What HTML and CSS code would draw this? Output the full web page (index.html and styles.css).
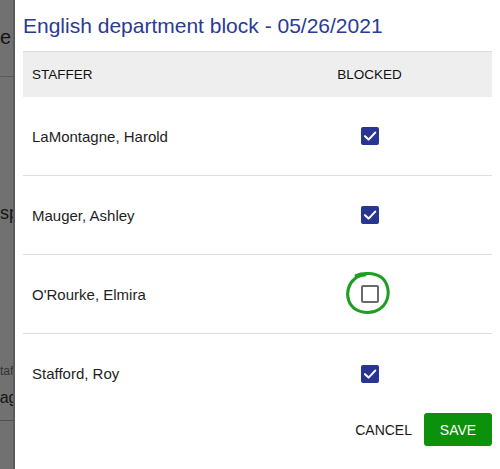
FILE: index.html
```html
<!DOCTYPE html>
<html lang="en">
<head>
<meta charset="utf-8">
<title>English department block</title>
<link rel="stylesheet" href="styles.css">
</head>
<body>
<div class="screen">
  <aside class="backdrop" aria-hidden="true">
    <div class="bd-top"><span class="bd-date">Date:</span></div>
    <div class="bd-display">Display</div>
    <div class="bd-label">Staffer</div>
    <div class="bd-value">Page</div>
  </aside>
  <section class="dialog">
    <h1 class="title">English department block - 05/26/2021</h1>
    <div class="table">
      <div class="row head">
        <div class="cell name">STAFFER</div>
        <div class="cell box">BLOCKED</div>
      </div>
      <div class="row">
        <div class="cell name">LaMontagne, Harold</div>
        <div class="cell box"><span class="check on"><svg viewBox="0 0 18 18" width="18" height="18"><path d="M4 9.2 L7.6 12.6 L14.2 5.6" fill="none" stroke="#fff" stroke-width="2.1" stroke-linecap="round" stroke-linejoin="round"/></svg></span></div>
      </div>
      <div class="row">
        <div class="cell name">Mauger, Ashley</div>
        <div class="cell box"><span class="check on"><svg viewBox="0 0 18 18" width="18" height="18"><path d="M4 9.2 L7.6 12.6 L14.2 5.6" fill="none" stroke="#fff" stroke-width="2.1" stroke-linecap="round" stroke-linejoin="round"/></svg></span></div>
      </div>
      <div class="row">
        <div class="cell name">O'Rourke, Elmira</div>
        <div class="cell box">
          <span class="check off"></span>
          <svg class="scribble" viewBox="0 0 50 46" width="50" height="46"><path d="M13 5.5 C19 2.5 31 2.5 38 7 C44 11.5 47 21 44 29.5 C41 38 33 42.5 24.5 42.5 C15.5 42.5 8 38 5.5 30 C3 22 6 13.5 11.5 9 C14.5 6.5 18 5 22 5" fill="none" stroke="#1f9e24" stroke-width="3" stroke-linecap="round" stroke-linejoin="round"/></svg>
        </div>
      </div>
      <div class="row last">
        <div class="cell name">Stafford, Roy</div>
        <div class="cell box"><span class="check on"><svg viewBox="0 0 18 18" width="18" height="18"><path d="M4 9.2 L7.6 12.6 L14.2 5.6" fill="none" stroke="#fff" stroke-width="2.1" stroke-linecap="round" stroke-linejoin="round"/></svg></span></div>
      </div>
    </div>
    <div class="actions">
      <button class="btn cancel" type="button">CANCEL</button>
      <button class="btn save" type="button">SAVE</button>
    </div>
  </section>
</div>
</body>
</html>
```

FILE: styles.css
```css
html, body {
  margin: 0;
  padding: 0;
  background: #ffffff;
}
body {
  font-family: "Liberation Sans", Arial, sans-serif;
  width: 500px;
  height: 469px;
  overflow: hidden;
}
.screen {
  display: flex;
  height: 469px;
}
.backdrop {
  width: 13px;
  flex: 0 0 13px;
  background: #717171;
  border-right: 2px solid #5b5b5b;
  overflow: hidden;
  white-space: nowrap;
  color: #141414;
}
.bd-top {
  padding-top: 25px;
  height: 51px;
  border-bottom: 1px solid #5a5a5a;
}
.bd-date {
  display: block;
  font-size: 20px;
  line-height: 24px;
  text-indent: -31px;
}
.bd-display {
  margin-top: 125px;
  font-size: 18px;
  line-height: 22px;
  text-indent: -17px;
}
.bd-label {
  margin-top: 140px;
  font-size: 12px;
  line-height: 14px;
  text-indent: -8px;
  color: #333;
}
.bd-value {
  margin-top: 10px;
  padding-bottom: 12px;
  font-size: 16px;
  line-height: 20px;
  text-indent: -11px;
  border-bottom: 1px solid #4f4f4f;
}
.dialog {
  flex: 1;
  background: #ffffff;
  padding: 13px 8px 0 8px;
  display: flex;
  flex-direction: column;
}
.title {
  margin: 0 0 13px 0;
  font-weight: normal;
  font-size: 21px;
  line-height: 25px;
  color: #2b3a93;
  white-space: nowrap;
}
.table {
  display: flex;
  flex-direction: column;
}
.row {
  display: grid;
  grid-template-columns: 224px 1fr;
  height: 78px;
  border-bottom: 1px solid #dedede;
  align-items: center;
}
.row.last {
  border-bottom: none;
  height: 79px;
}
.row.head {
  height: 45px;
  background: #eeeeee;
  border-top: 1px solid #dcdcdc;
  border-bottom: none;
  font-size: 13.5px;
  color: #111;
}
.cell.name {
  padding-left: 9px;
  font-size: 15px;
  color: #1e1e1e;
}
.head .cell.name {
  font-size: 13.5px;
  color: #111;
}
.cell.box {
  position: relative;
  display: flex;
  justify-content: center;
  align-items: center;
}
.check {
  width: 18px;
  height: 18px;
  box-sizing: border-box;
  border-radius: 2px;
  display: block;
}
.check svg {
  display: block;
}
.check.on {
  background: #283593;
}
.check.off {
  border: 2px solid #6a6a6a;
  background: #fff;
}
.scribble {
  position: absolute;
  left: 50%;
  top: 50%;
  margin-left: -27px;
  margin-top: -24px;
}
.actions {
  display: flex;
  justify-content: flex-end;
  align-items: center;
  gap: 12px;
}
.btn {
  font-family: "Liberation Sans", Arial, sans-serif;
  font-size: 14px;
  border: none;
  cursor: pointer;
}
.btn.cancel {
  background: transparent;
  padding: 0;
  color: #1a1a1a;
  height: 33px;
}
.btn.save {
  background: #0b910c;
  color: #ffffff;
  width: 68px;
  height: 33px;
  border-radius: 3px;
  padding: 0;
}
```
